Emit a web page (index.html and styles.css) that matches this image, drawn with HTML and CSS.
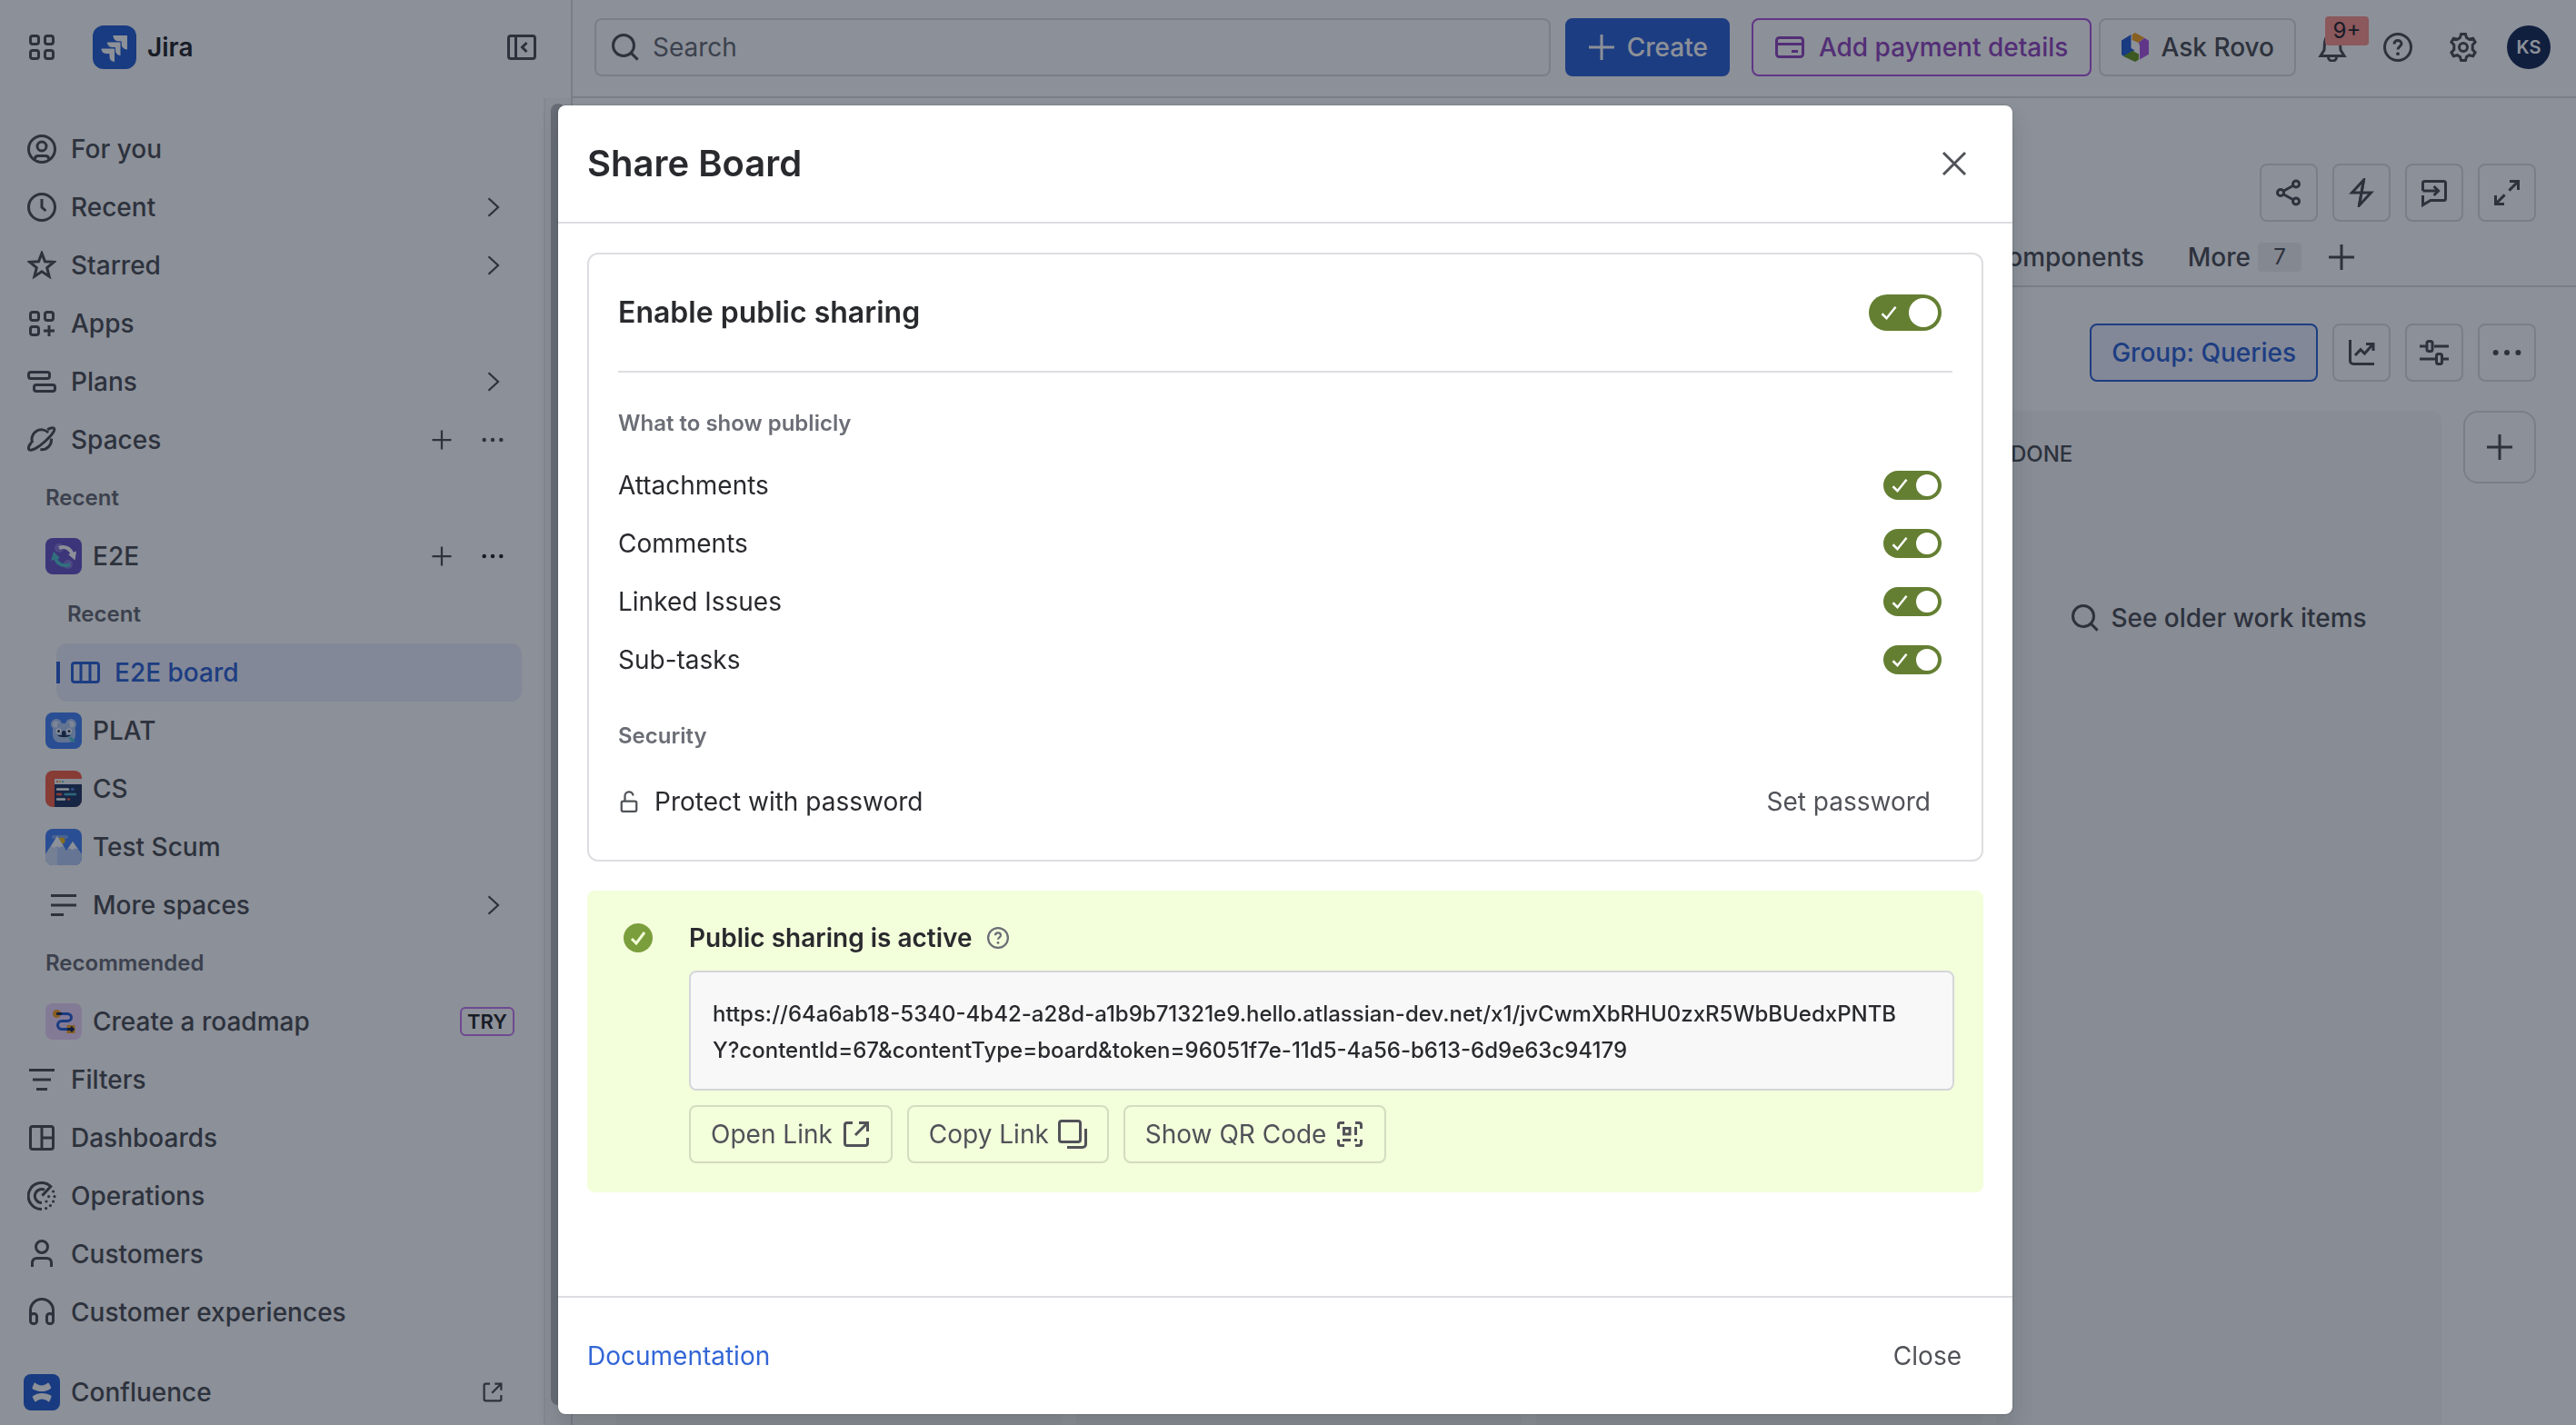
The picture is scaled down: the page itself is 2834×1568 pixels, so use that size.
FILE: index.html
```html
<!DOCTYPE html>
<html lang="en">
<head>
  <meta charset="UTF-8">
  <meta name="viewport" content="width=device-width, initial-scale=1.0">
  <title>E2E board - Jira</title>
  <link rel="stylesheet" href="styles.css">
</head>
<body>

  <!-- icon sprite, all on a 16 grid -->
  <svg class="sprite" xmlns="http://www.w3.org/2000/svg">
    <symbol id="i-grid" viewBox="0 0 16 16"><rect x="1.75" y="1.75" width="4.5" height="4.5" rx="1.25"/><rect x="9.75" y="1.75" width="4.5" height="4.5" rx="1.25"/><rect x="1.75" y="9.75" width="4.5" height="4.5" rx="1.25"/><rect x="9.75" y="9.75" width="4.5" height="4.5" rx="1.25"/></symbol>
    <symbol id="i-collapse" viewBox="0 0 16 16"><rect x=".75" y="1.75" width="14.5" height="12.5" rx="1.25"/><path d="M4.75 2v12M10.75 5.5 8.25 8l2.5 2.5"/></symbol>
    <symbol id="i-user" viewBox="0 0 16 16"><circle cx="8" cy="8" r="7.25"/><circle cx="8" cy="6.5" r="2.5"/><path d="M4.25 13.8v-.55c0-1 .75-1.5 1.75-1.5h4c1 0 1.75.5 1.75 1.5v.55"/></symbol>
    <symbol id="i-clock" viewBox="0 0 16 16"><circle cx="8" cy="8" r="7.25"/><path d="M8 3.5V8l2.2 2"/></symbol>
    <symbol id="i-star" viewBox="0 0 16 16"><path d="m8 1.3 1.75 4.55 4.85.3-3.75 3.1 1.2 4.85L8 11.4l-4.05 2.7 1.2-4.85L1.4 6.15l4.85-.3z"/></symbol>
    <symbol id="i-apps" viewBox="0 0 16 16"><rect x="1.75" y="1.75" width="4.5" height="4.5" rx="1.25"/><rect x="9.75" y="1.75" width="4.5" height="4.5" rx="1.25"/><rect x="1.75" y="9.75" width="4.5" height="4.5" rx="1.25"/><path d="M12 9v6M9 12h6"/></symbol>
    <symbol id="i-plans" viewBox="0 0 16 16"><rect x=".75" y="2.75" width="11.5" height="3.5" rx="1.25"/><rect x="3.75" y="9.75" width="11.5" height="3.5" rx="1.25"/></symbol>
    <symbol id="i-planet" viewBox="0 0 16 16"><path d="M2.9 9.7A5.3 5.3 0 0 1 11.6 4M13.2 7.3A5.3 5.3 0 0 1 7.2 13.3M2.7 8.9C.9 11 .3 12.7 1 13.3c1.2 1.1 5-1 8.6-4.3s6.200-6.400 5-7.400c-.6-.5-1.900-.2-3.500.7"/></symbol>
    <symbol id="i-chevron" viewBox="0 0 16 16"><path d="m5 1.500 7 6.500-7 6.500"/></symbol>
    <symbol id="i-plus" viewBox="0 0 16 16"><path d="M8 1v14M1 8h14"/></symbol>
    <symbol id="i-more" viewBox="0 0 16 16"><g fill="currentColor" stroke="none"><circle cx="1.800" cy="8" r="1.500"/><circle cx="8" cy="8" r="1.500"/><circle cx="14.200" cy="8" r="1.500"/></g></symbol>
    <symbol id="i-board" viewBox="0 0 16 16"><rect x=".75" y="2.750" width="14.500" height="10.500" rx="1.250"/><path d="M5.500 3v10M10.500 3v10"/></symbol>
    <symbol id="i-lines" viewBox="0 0 16 16"><path d="M1 2.750h14M1 8h14M1 13.250h7"/></symbol>
    <symbol id="i-filter" viewBox="0 0 16 16"><path d="M1 2.750h14M3 8h10M5 13.250h6"/></symbol>
    <symbol id="i-dash" viewBox="0 0 16 16"><rect x="1.750" y="1.750" width="12.500" height="12.500" rx="1.250"/><path d="M8 2v12M8 8h6"/></symbol>
    <symbol id="i-ops" viewBox="0 0 16 16"><path d="M8 15.250A7.250 7.250 0 1 1 12.900 2.800L8.200 7.800M8 11.750A3.750 3.750 0 1 1 9.500 4.600"/><g fill="currentColor" stroke="none"><circle cx="14.300" cy="5.500" r=".8"/><circle cx="15" cy="8.300" r=".8"/><circle cx="14.300" cy="11" r=".8"/><circle cx="12.700" cy="13.300" r=".8"/><circle cx="10.300" cy="14.800" r=".8"/><circle cx="11.800" cy="8.300" r=".8"/><circle cx="10.500" cy="11" r=".8"/></g></symbol>
    <symbol id="i-person" viewBox="0 0 16 16"><circle cx="8" cy="4" r="3.250"/><path d="M2.750 15v-2.250c0-1.500 1-2.500 2.500-2.500h5.500c1.500 0 2.500 1 2.500 2.500V15"/></symbol>
    <symbol id="i-headset" viewBox="0 0 16 16"><path d="M1.750 12V7a6.250 6.250 0 0 1 12.500 0v5"/><rect x="1.750" y="8.750" width="3.500" height="5.500" rx="1.500"/><rect x="10.750" y="8.750" width="3.500" height="5.500" rx="1.500"/></symbol>
    <symbol id="i-external" viewBox="0 0 16 16"><path d="M6 1.750H3c-.7 0-1.250.55-1.250 1.250v10c0 .7.550 1.250 1.250 1.250h10c.7 0 1.250-.55 1.250-1.250v-3M9.500 1.750h4.750V6.500M14 2 7.500 8.500"/></symbol>
    <symbol id="i-search" viewBox="0 0 16 16"><circle cx="7" cy="7" r="5.750"/><path d="m11.200 11.200 3.600 3.600"/></symbol>
    <symbol id="i-card" viewBox="0 0 16 16"><rect x=".75" y="2.750" width="14.500" height="10.500" rx="1.500"/><path d="M1 6.250h14M9 10.250h3.500"/></symbol>
    <symbol id="i-bell" viewBox="0 0 16 16"><path d="M8 1a4.200 4.200 0 0 0-4.200 4.100L3.500 9.500l-2 3.200h13l-2-3.200-.3-4.400A4.200 4.200 0 0 0 8 1zM5.700 13.200a2.300 2.300 0 0 0 4.600 0"/></symbol>
    <symbol id="i-help" viewBox="0 0 16 16"><circle cx="8" cy="8" r="7.250"/><path d="M6 6.200c0-1.200.9-1.950 2-1.950s2 .75 2 1.850C10 7.500 8 7.600 8 9.200"/><circle cx="8" cy="11.600" r=".95" fill="currentColor" stroke="none"/></symbol>
    <symbol id="i-gear" viewBox="0 0 16 16"><path d="M6.800.75h2.400l.6 2.050 1.500.85 2.050-.5 1.200 2.050L13.100 6.700v2.600l1.450 1.500-1.200 2.050-2.050-.5-1.500.85-.6 2.050H6.800l-.6-2.050-1.500-.85-2.050.5-1.200-2.050L2.900 9.300V6.700L1.450 5.200l1.200-2.050 2.050.5 1.500-.85z"/><circle cx="8" cy="8" r="2.250"/></symbol>
    <symbol id="i-share" viewBox="0 0 16 16"><circle cx="3.500" cy="8" r="1.750"/><circle cx="12" cy="3.250" r="1.750"/><circle cx="12" cy="12.750" r="1.750"/><path d="m5.100 7.100 5.300-3M5.100 8.900l5.300 3"/></symbol>
    <symbol id="i-bolt" viewBox="0 0 16 16"><path d="M9.250 1 2.750 8h10.500l-6.500 7z"/><path d="m9.250 1-2.500 14"/></symbol>
    <symbol id="i-feedback" viewBox="0 0 16 16"><path d="M1.750 7V2.750c0-.6.400-1 1-1h10.500c.6 0 1 .4 1 1v8.500c0 .6-.4 1-1 1H6L1.750 14.800V9.500M1.750 7H10M7.800 4.500 10.300 7 7.800 9.500"/></symbol>
    <symbol id="i-expand" viewBox="0 0 16 16"><path d="M9.500 1.750h4.750V6.500M14 2 9.200 6.800M6.500 14.250H1.750V9.500M2 14l4.800-4.800"/></symbol>
    <symbol id="i-chart" viewBox="0 0 16 16"><path d="M1.750 1v11.500c0 1 .75 1.750 1.750 1.750H15M4.500 9.500l3-3.200 2.200 2.200 4.500-5M10.500 3.250h4V7"/></symbol>
    <symbol id="i-sliders" viewBox="0 0 16 16"><path d="M0 4.500h3.500M8 4.500h8M0 11.500h8.500M13 11.500h3"/><rect x="4" y="1.750" width="3" height="5.500" rx="1"/><rect x="9.250" y="8.750" width="3" height="5.500" rx="1"/></symbol>
    <symbol id="i-close" viewBox="0 0 16 16"><path d="m2 2 12 12M14 2 2 14"/></symbol>
    <symbol id="i-lock" viewBox="0 0 16 16"><rect x="2.500" y="7.750" width="11" height="7.500" rx="1.250"/><path d="M5 7.500V4a3 3 0 0 1 6-.3"/></symbol>
    <symbol id="i-copy" viewBox="0 0 16 16"><rect x=".75" y=".75" width="11.500" height="11.500" rx="1.250"/><path d="M15.250 5v8.500c0 1-.75 1.750-1.750 1.750H5"/></symbol>
    <symbol id="i-qr" viewBox="0 0 16 16"><path d="M5 1.750H3c-.7 0-1.250.55-1.250 1.250v2M11 1.750h2c.7 0 1.250.55 1.250 1.250v2M5 14.250H3c-.7 0-1.250-.55-1.250-1.250v-2M11 14.250h2c.7 0 1.250-.55 1.250-1.250v-2M11.250 4v4.500M4 11.250h4.500M10.500 11.250H12"/><rect x="4.750" y="4.750" width="3.250" height="3.250"/></symbol>
    <symbol id="i-check" viewBox="0 0 16 16"><path d="m2 9 4 4 8-10"/></symbol>
  </svg>

  <header class="topbar">
    <div class="topbar-left">
      <button class="icon-plain" aria-label="Switch apps"><svg class="icon"><use href="#i-grid"/></svg></button>
      <a class="brand" href="#">
        <svg class="brand-logo" viewBox="0 0 48 48"><rect width="48" height="48" rx="12" fill="#2A63D4"/><g fill="#fff"><path d="M22.500 11H38v15.500c-4 0-6.500-3-6.500-6.500v-2.500H29c-4 0-6.500-2.500-6.500-6.500z"/><path d="M15.500 18H31v15.500c-4 0-6.500-3-6.500-6.500v-2.500H22c-4 0-6.500-2.500-6.500-6.500z" stroke="#2A63D4"/><path d="M9 25h15.500v15.500c-4 0-6.500-3-6.500-6.500v-2.500h-2.500C11.500 31.500 9 29 9 25z" stroke="#2A63D4"/></g></svg>
        <span>Jira</span>
      </a>
      <button class="icon-plain" aria-label="Collapse sidebar"><svg class="icon"><use href="#i-collapse"/></svg></button>
    </div>
    <div class="topbar-right">
      <label class="search">
        <svg class="icon"><use href="#i-search"/></svg>
        <input type="text" placeholder="Search" aria-label="Search">
      </label>
      <button class="btn primary"><svg class="icon"><use href="#i-plus"/></svg>Create</button>
      <div class="topbar-actions">
        <button class="btn payment"><svg class="icon"><use href="#i-card"/></svg>Add payment details</button>
        <button class="btn"><svg class="icon rovo" viewBox="0 0 32 32"><path d="m1 8.500 10.500-6.500v15l4 2.500L3.500 26 1 24z" fill="#2A63D4"/><path d="M12.700 2 16 0l10 5.500-6.500 5.500-6.800-3z" fill="#F5A524"/><path d="m26.200 5.700 4.800 3v15l-10 5.800V14l-1.300-3z" fill="#AF59E1"/><path d="m3 26 10-6.300 7 3.800v6L16 32z" fill="#6A9A23"/></svg>Ask Rovo</button>
        <button class="icon-btn bell" aria-label="Notifications"><svg class="icon"><use href="#i-bell"/></svg><span class="count">9+</span></button>
        <button class="icon-btn" aria-label="Help"><svg class="icon"><use href="#i-help"/></svg></button>
        <button class="icon-btn" aria-label="Settings"><svg class="icon"><use href="#i-gear"/></svg></button>
        <button class="icon-btn" aria-label="Profile"><span class="avatar">KS</span></button>
      </div>
    </div>
  </header>

  <div class="page">
    <aside class="sidebar">
      <nav class="nav">
        <a class="item" href="#"><span class="slot"><svg class="icon"><use href="#i-user"/></svg></span>For you</a>
        <a class="item" href="#"><span class="slot"><svg class="icon"><use href="#i-clock"/></svg></span>Recent<svg class="icon small end"><use href="#i-chevron"/></svg></a>
        <a class="item" href="#"><span class="slot"><svg class="icon"><use href="#i-star"/></svg></span>Starred<svg class="icon small end"><use href="#i-chevron"/></svg></a>
        <a class="item" href="#"><span class="slot"><svg class="icon"><use href="#i-apps"/></svg></span>Apps</a>
        <a class="item" href="#"><span class="slot"><svg class="icon"><use href="#i-plans"/></svg></span>Plans<svg class="icon small end"><use href="#i-chevron"/></svg></a>
        <a class="item" href="#"><span class="slot"><svg class="icon"><use href="#i-planet"/></svg></span>Spaces<svg class="icon small end"><use href="#i-plus"/></svg><svg class="icon small"><use href="#i-more"/></svg></a>

        <h2 class="group">Recent</h2>
        <a class="item level1" href="#"><span class="slot">
          <svg class="tile" viewBox="0 0 40 40"><rect width="40" height="40" rx="8" fill="#6B58C8"/><g fill="#8B7BD8"><circle cx="15" cy="11" r="5"/><circle cx="25" cy="29" r="5"/></g><path d="M15 11c7-3 13 1 15 8" fill="none" stroke="#fff" stroke-width="4"/><path d="m34 14.500-1.500 10L25 18z" fill="#fff"/><path d="M27 29c-7 3-14 0-16-7" fill="none" stroke="#57C5D0" stroke-width="4"/><path d="m6 25 3-10 7 7z" fill="#57C5D0"/></svg>
        </span>E2E<svg class="icon small end"><use href="#i-plus"/></svg><svg class="icon small dark"><use href="#i-more"/></svg></a>

        <h2 class="group deeper">Recent</h2>
        <a class="item level2 selected" href="#"><span class="slot"><svg class="icon"><use href="#i-board"/></svg></span>E2E board</a>
        <a class="item level1" href="#"><span class="slot">
          <svg class="tile" viewBox="0 0 40 40"><rect width="40" height="40" rx="8" fill="#4A86F5"/><g fill="#B3CBF5"><circle cx="12" cy="13" r="6"/><circle cx="28" cy="13" r="6"/><rect x="8" y="12" width="25" height="21" rx="8"/></g><g fill="#E4EDFC"><circle cx="11.500" cy="13" r="3.500"/><circle cx="28.500" cy="13" r="3.500"/></g><rect x="13" y="12" width="14" height="8" fill="#B3CBF5"/><g fill="#fff"><circle cx="14.500" cy="20.500" r="3"/><circle cx="26" cy="20.500" r="3"/></g><g fill="#253858"><circle cx="14.500" cy="20.500" r="1.500"/><circle cx="26" cy="20.500" r="1.500"/><rect x="18" y="20" width="4.500" height="6.500" rx="2"/><path d="M13 25h15c-3 3-12 3-15 0z"/></g><path d="m25 26 5 2 3 5c-4 0-6-2-8-7z" fill="#57C5D0"/></svg>
        </span>PLAT</a>
        <a class="item level1" href="#"><span class="slot">
          <svg class="tile" viewBox="0 0 40 40"><rect width="40" height="40" rx="8" fill="#F5654A"/><path d="M10 9h30v6H10z" fill="#F4F5F7"/><path d="M10 15h30v17a8 8 0 0 1-8 8H10z" fill="#2A3C66"/><g stroke-width="2.400" stroke-linecap="round"><path d="M13 20.500h12M13 31.500h8" stroke="#fff"/><path d="M29 20.500h1.500" stroke="#5B8DEF"/><path d="M13 26h4M25 31.500h1" stroke="#F5654A"/><path d="M21.500 26H33" stroke="#4FB6CF"/></g><circle cx="13" cy="12" r="1" fill="#F5654A"/><circle cx="16" cy="12" r="1" fill="#F5B324"/><circle cx="19" cy="12" r="1" fill="#4FB6CF"/></svg>
        </span>CS</a>
        <a class="item level1" href="#"><span class="slot">
          <svg class="tile" viewBox="0 0 40 40"><rect width="40" height="40" rx="8" fill="#4A86F5"/><rect x="7" y="7" width="18" height="4" rx="2" fill="#86ADF5"/><circle cx="18" cy="13" r="3.500" fill="#F5C324"/><path d="M0 28 13 8l10 16 7-10 10 14v4a8 8 0 0 1-8 8H8a8 8 0 0 1-8-8z" fill="#B9CEF7"/><path d="M0 28 13 8v32H8a8 8 0 0 1-8-8z" fill="#D5E1F9"/><path d="m13 8 7.500 12-3-1-2 2-3-2-3 2-3-2zM30 14l5.500 8-3-.5-2.500 1.500-3-1.500-2.500.5z" fill="#fff"/></svg>
        </span>Test Scum</a>
        <a class="item level1" href="#"><span class="slot"><svg class="icon"><use href="#i-lines"/></svg></span>More spaces<svg class="icon small end"><use href="#i-chevron"/></svg></a>

        <h2 class="group">Recommended</h2>
        <a class="item level1" href="#"><span class="slot">
          <svg class="tile" viewBox="0 0 40 40"><rect width="40" height="40" rx="8" fill="#EED7FC"/><circle cx="12.500" cy="11.500" r="4.500" fill="#F5A524"/><rect x="23.500" y="24" width="9" height="9" fill="#F5A524"/><path d="M13 11.500h11c6 0 6 8 0 8h-6c-6 0-6 9 0 9h10" fill="none" stroke="#2A63D4" stroke-width="3"/><path d="M12 11.500h6M24 28.500h5M28 26l2.500 2.500L28 31" fill="none" stroke="#1C2B52" stroke-width="2.500"/></svg>
        </span>Create a roadmap<span class="try">TRY</span></a>
        <a class="item" href="#"><span class="slot"><svg class="icon"><use href="#i-filter"/></svg></span>Filters</a>
        <a class="item" href="#"><span class="slot"><svg class="icon"><use href="#i-dash"/></svg></span>Dashboards</a>
        <a class="item" href="#"><span class="slot"><svg class="icon"><use href="#i-ops"/></svg></span>Operations</a>
        <a class="item" href="#"><span class="slot"><svg class="icon"><use href="#i-person"/></svg></span>Customers</a>
        <a class="item" href="#"><span class="slot"><svg class="icon"><use href="#i-headset"/></svg></span>Customer experiences</a>
        <a class="item apart" href="#"><span class="slot">
          <svg class="tile" viewBox="0 0 40 40"><rect width="40" height="40" rx="8" fill="#2A63D4"/><path d="M11.500 10 9.500 15c-.3.700 0 1.200.6 1.500C15 19.500 24 20.500 29.500 16c.6-.5 1-1 .6-1.800l-2.200-4c-.3-.6-.8-.8-1.500-.4-4.500 3.700-9 3.500-13.500.0-.6-.4-1.200-.3-1.400.2zM28.500 30l2-5c.3-.7 0-1.200-.6-1.500C25 20.500 16 19.500 10.500 24c-.6.500-1 1-.6 1.800l2.200 4c.3.600.8.800 1.500.4 4.500-3.700 9-3.500 13.500 0 .6.4 1.200.3 1.400-.2z" fill="#fff"/></svg>
        </span>Confluence<svg class="icon small end"><use href="#i-external"/></svg></a>
      </nav>
      <div class="track"><div class="thumb"></div></div>
    </aside>

    <main class="main">
      <div class="toolbar">
        <button class="btn square" aria-label="Share"><svg class="icon"><use href="#i-share"/></svg></button>
        <button class="btn square" aria-label="Automation"><svg class="icon"><use href="#i-bolt"/></svg></button>
        <button class="btn square" aria-label="Give feedback"><svg class="icon"><use href="#i-feedback"/></svg></button>
        <button class="btn square" aria-label="Full screen"><svg class="icon"><use href="#i-expand"/></svg></button>
      </div>
      <nav class="tabs">
        <a href="#">Components</a>
        <a href="#">More <span class="num">7</span></a>
        <button class="icon-btn" aria-label="Add view"><svg class="icon"><use href="#i-plus"/></svg></button>
      </nav>
      <div class="toolbar filters">
        <button class="btn chosen">Group: Queries</button>
        <button class="btn square" aria-label="Insights"><svg class="icon"><use href="#i-chart"/></svg></button>
        <button class="btn square" aria-label="View settings"><svg class="icon"><use href="#i-sliders"/></svg></button>
        <button class="btn square" aria-label="More actions"><svg class="icon"><use href="#i-more"/></svg></button>
      </div>
      <div class="board">
        <section class="column"></section>
        <section class="column"></section>
        <section class="column"></section>
        <section class="column">
          <h3>DONE</h3>
          <a class="older" href="#"><svg class="icon"><use href="#i-search"/></svg>See older work items</a>
        </section>
        <button class="btn add-column" aria-label="Add column"><svg class="icon"><use href="#i-plus"/></svg></button>
      </div>
    </main>
  </div>

  <div class="blanket">
    <div class="modal" role="dialog" aria-labelledby="modal-title">
      <div class="modal-head">
        <h1 id="modal-title">Share Board</h1>
        <button class="icon-btn" aria-label="Close dialog"><svg class="icon"><use href="#i-close"/></svg></button>
      </div>

      <div class="modal-body">
        <section class="card">
          <div class="enable">
            <label for="enable">Enable public sharing</label>
            <span class="toggle large"><input type="checkbox" id="enable" checked><svg class="tick"><use href="#i-check"/></svg></span>
          </div>
          <h2 class="sub">What to show publicly</h2>
          <div class="option">
            <label for="attachments">Attachments</label>
            <span class="toggle"><input type="checkbox" id="attachments" checked><svg class="tick"><use href="#i-check"/></svg></span>
          </div>
          <div class="option">
            <label for="comments">Comments</label>
            <span class="toggle"><input type="checkbox" id="comments" checked><svg class="tick"><use href="#i-check"/></svg></span>
          </div>
          <div class="option">
            <label for="linked">Linked Issues</label>
            <span class="toggle"><input type="checkbox" id="linked" checked><svg class="tick"><use href="#i-check"/></svg></span>
          </div>
          <div class="option">
            <label for="subtasks">Sub-tasks</label>
            <span class="toggle"><input type="checkbox" id="subtasks" checked><svg class="tick"><use href="#i-check"/></svg></span>
          </div>
          <h2 class="sub security">Security</h2>
          <div class="protect">
            <svg class="icon small"><use href="#i-lock"/></svg>
            <span>Protect with password</span>
            <button class="btn subtle">Set password</button>
          </div>
        </section>

        <section class="active">
          <svg class="status" viewBox="0 0 32 32"><circle cx="16" cy="16" r="16" fill="#7A9E3B"/><path d="m9 17 5 5 9-12" fill="none" stroke="#F3FEDB" stroke-width="3"/></svg>
          <div class="active-body">
            <h2>Public sharing is active <svg class="icon small"><use href="#i-help"/></svg></h2>
            <div class="url">https://64a6ab18-5340-4b42-a28d-a1b9b71321e9.hello.atlassian-dev.net/x1/jvCwmXbRHU0zxR5WbBUedxPNTBY?contentId=67&amp;contentType=board&amp;token=96051f7e-11d5-4a56-b613-6d9e63c94179</div>
            <div class="links">
              <button class="btn">Open Link<svg class="icon"><use href="#i-external"/></svg></button>
              <button class="btn">Copy Link<svg class="icon"><use href="#i-copy"/></svg></button>
              <button class="btn">Show QR Code<svg class="icon"><use href="#i-qr"/></svg></button>
            </div>
          </div>
        </section>
      </div>

      <div class="modal-foot">
        <a href="#">Documentation</a>
        <button class="btn subtle">Close</button>
      </div>
    </div>
  </div>

</body>
</html>
```

FILE: styles.css
```css
* {
  box-sizing: border-box;
}
body {
  margin: 0;
  height: 100vh;
  display: flex;
  flex-direction: column;
  overflow: hidden;
  font-family: Inter, "Liberation Sans", sans-serif;
  font-size: 28px;
  line-height: 40px;
  color: #292a2e;
  background: #fff;
}
h1, h2, h3 {
  margin: 0;
}
a {
  color: inherit;
  text-decoration: none;
}
button, input {
  font: inherit;
  color: inherit;
  border: 0;
  padding: 0;
  background: none;
}
.sprite {
  display: none;
}
.icon {
  width: 32px;
  height: 32px;
  flex: none;
  fill: none;
  stroke: currentColor;
  stroke-width: 1.5;
}
.icon.small {
  width: 24px;
  height: 24px;
}
.icon.dark {
  color: #292a2e;
}
.icon.rovo {
  stroke: none;
}

/* buttons */
.btn {
  height: 64px;
  display: flex;
  align-items: center;
  justify-content: center;
  gap: 12px;
  padding: 0 22px;
  border: 2px solid #dddee1;
  border-radius: 8px;
  font-weight: 500;
  color: #505258;
  white-space: nowrap;
  flex: none;
}
.btn.square {
  width: 64px;
  padding: 0;
}
.btn.primary {
  background: #3366d6;
  border-color: #3366d6;
  color: #fff;
}
.btn.payment {
  gap: 16px;
  padding: 0 24px;
  border-color: #af59e1;
  color: #964ac0;
}
.btn.chosen {
  background: #ecf0fd;
  border-color: #3366d6;
  color: #3366d6;
}
.btn.subtle {
  border-color: transparent;
  font-weight: 400;
}
.icon-btn {
  width: 64px;
  height: 64px;
  display: flex;
  align-items: center;
  justify-content: center;
  flex: none;
  color: #505258;
}
.icon-plain {
  display: flex;
  color: #505258;
}

/* top bar */
.topbar {
  display: flex;
  height: 108px;
  flex: none;
}
.topbar-left {
  width: 630px;
  padding: 0 38px 4px 30px;
  border-right: 2px solid #dddee1;
  display: flex;
  align-items: center;
}
.brand {
  display: flex;
  align-items: center;
  gap: 12px;
  margin: 0 auto 0 40px;
  font-weight: 600;
}
.brand-logo {
  width: 48px;
  height: 48px;
}
.topbar-right {
  flex: 1;
  display: flex;
  align-items: center;
  gap: 16px;
  padding: 0 20px 2px 24px;
  border-bottom: 2px solid #dddee1;
}
.search {
  flex: 1;
  height: 64px;
  display: flex;
  align-items: center;
  gap: 14px;
  padding: 0 16px;
  border: 2px solid #dddee1;
  border-radius: 8px;
  color: #505258;
}
.search input {
  flex: 1;
  outline: 0;
}
.search input::placeholder {
  color: #6b6e76;
}
.topbar-actions {
  display: flex;
  gap: 8px;
  margin-left: 8px;
}
.bell {
  position: relative;
}
.count {
  position: absolute;
  top: -2px;
  left: 24px;
  width: 48px;
  height: 32px;
  line-height: 32px;
  font-size: 24px;
  text-align: center;
  border-radius: 4px;
  background: #fd9891;
  color: #292a2e;
}
.avatar {
  width: 48px;
  height: 48px;
  line-height: 48px;
  border-radius: 50%;
  background: #1c2f5c;
  color: #fff;
  font-size: 20px;
  font-weight: 600;
}

/* sidebar */
.page {
  flex: 1;
  min-height: 0;
  display: flex;
}
.sidebar {
  width: 630px;
  flex: none;
  display: flex;
  border-right: 2px solid #dddee1;
}
.nav {
  flex: 1;
  padding: 24px 24px 0 14px;
}
.item {
  height: 64px;
  display: flex;
  align-items: center;
  gap: 32px;
  padding-right: 20px;
  border-radius: 12px;
  font-weight: 500;
  color: #505258;
}
.slot {
  width: 64px;
  margin-right: -32px;
  display: flex;
  justify-content: center;
}
.item .end {
  margin-left: auto;
}
.tile {
  width: 40px;
  height: 40px;
}
.level1 {
  margin-left: 24px;
}
.level2 {
  margin-left: 48px;
}
.selected {
  background: #ecf0fd linear-gradient(#3366d6, #3366d6) 0 50% / 4px 24px no-repeat;
  color: #3366d6;
}
.apart {
  margin-top: 24px;
}
.group {
  height: 64px;
  line-height: 64px;
  padding-left: 36px;
  font-size: 24px;
  font-weight: 600;
  color: #6b6e76;
}
.deeper {
  padding-left: 60px;
}
.try {
  margin-left: auto;
  margin-right: -12px;
  height: 32px;
  line-height: 28px;
  padding: 0 6px;
  border: 2px solid #c97cf4;
  border-radius: 6px;
  font-size: 22px;
  font-weight: 600;
  color: #292a2e;
}
.track {
  width: 30px;
  padding: 6px;
  border-left: 2px solid #eeeff1;
  background: #fafafb;
}
.thumb {
  width: 16px;
  height: calc(100% - 16px);
  border-radius: 8px;
  background: #bbbcc0;
}

/* board */
.main {
  flex: 1;
  min-width: 0;
  display: flex;
  flex-direction: column;
  padding-top: 72px;
}
.toolbar {
  display: flex;
  justify-content: flex-end;
  gap: 16px;
  padding-right: 44px;
}
.filters {
  padding-top: 40px;
  padding-bottom: 32px;
}
.tabs {
  height: 72px;
  display: flex;
  justify-content: flex-end;
  align-items: center;
  padding: 8px 226px 0 0;
  border-bottom: 2px solid #dddee1;
  font-weight: 500;
  color: #505258;
}
.tabs a {
  display: flex;
  align-items: center;
  gap: 8px;
  margin-left: 48px;
}
.tabs .icon-btn {
  margin-left: 12px;
}
.num {
  width: 48px;
  height: 32px;
  line-height: 32px;
  border-radius: 4px;
  background: #f0f1f2;
  text-align: center;
  font-size: 24px;
  font-weight: 400;
}
.board {
  flex: 1;
  display: flex;
  align-items: flex-start;
  gap: 16px;
  padding: 0 44px 0 48px;
}
.column {
  flex: 1;
  align-self: stretch;
  padding: 32px 16px;
  border-radius: 12px 12px 0 0;
  background: #f8f8f8;
}
.column h3 {
  line-height: 32px;
  font-size: 24px;
  font-weight: 500;
  color: #505258;
}
.older {
  display: flex;
  justify-content: center;
  align-items: center;
  gap: 12px;
  padding-top: 144px;
  font-weight: 500;
  color: #505258;
}
.btn.add-column {
  width: 80px;
  height: 80px;
  margin-left: 8px;
  border-radius: 16px;
}

/* share dialog */
.blanket {
  position: fixed;
  inset: 0;
  display: flex;
  justify-content: center;
  padding: 116px 6px 12px 0;
  background: rgba(5, 12, 31, 0.46);
}
.modal {
  width: 1600px;
  max-width: 100%;
  display: flex;
  flex-direction: column;
  border-radius: 8px;
  background: #fff;
  box-shadow: 0 16px 24px rgba(30, 31, 33, 0.15), 0 0 2px rgba(30, 31, 33, 0.31);
}
.modal-head, .modal-foot {
  display: flex;
  align-items: center;
  justify-content: space-between;
  padding: 32px;
}
.modal-head {
  border-bottom: 2px solid #dddee1;
}
.modal-head h1 {
  font-size: 40px;
  font-weight: 600;
  line-height: 48px;
}
.modal-foot {
  border-top: 2px solid #dddee1;
}
.modal-foot a {
  color: #3366d6;
}
.modal-body {
  flex: 1;
  padding: 32px;
}
.card {
  padding: 32px;
  border: 2px solid #dddee1;
  border-radius: 12px;
}
.enable {
  display: flex;
  align-items: center;
  justify-content: space-between;
  height: 98px;
  padding: 0 12px 32px 0;
  border-bottom: 2px solid #dddee1;
  font-size: 32px;
  font-weight: 600;
}
.sub {
  padding: 40px 0 20px;
  font-size: 24px;
  font-weight: 600;
  line-height: 32px;
  color: #6b6e76;
}
.sub.security {
  padding: 36px 0 24px;
}
.option {
  display: flex;
  align-items: center;
  justify-content: space-between;
  height: 64px;
  padding-right: 12px;
}
.protect {
  display: flex;
  align-items: center;
  gap: 16px;
}
.protect .icon {
  color: #505258;
}
.protect .btn {
  margin-left: auto;
}
.toggle {
  position: relative;
  display: flex;
}
.toggle input {
  appearance: none;
  width: 64px;
  height: 32px;
  margin: 0;
  padding: 4px;
  display: flex;
  justify-content: flex-end;
  border-radius: 20px;
  background: #647f32;
}
.toggle input::after {
  content: "";
  width: 24px;
  border-radius: 50%;
  background: #fff;
}
.tick {
  position: absolute;
  left: 8px;
  top: 6px;
  width: 20px;
  height: 20px;
  fill: none;
  stroke: #fff;
  stroke-width: 2;
}
.toggle.large input {
  width: 80px;
  height: 40px;
}
.toggle.large input::after {
  width: 32px;
}
.toggle.large .tick {
  left: 12px;
  top: 10px;
}

/* active link */
.active {
  display: flex;
  gap: 40px;
  margin-top: 32px;
  padding: 32px 32px 32px 40px;
  border-radius: 8px;
  background: #f3fedb;
}
.status {
  width: 32px;
  height: 32px;
  flex: none;
  margin-top: 4px;
}
.active-body {
  flex: 1;
}
.active h2 {
  display: flex;
  align-items: center;
  gap: 16px;
  font-size: 28px;
  font-weight: 600;
}
.active h2 .icon {
  color: #6b6e76;
}
.url {
  margin: 16px 0;
  padding: 26px 56px 22px 24px;
  border: 2px solid #d5d6da;
  border-radius: 8px;
  background: #f8f8f8;
  font-size: 24px;
  font-weight: 500;
  word-break: break-all;
}
.links {
  display: flex;
  gap: 16px;
}
.links .btn {
  gap: 10px;
  font-weight: 400;
  border-color: #d3dcc0;
}
```
